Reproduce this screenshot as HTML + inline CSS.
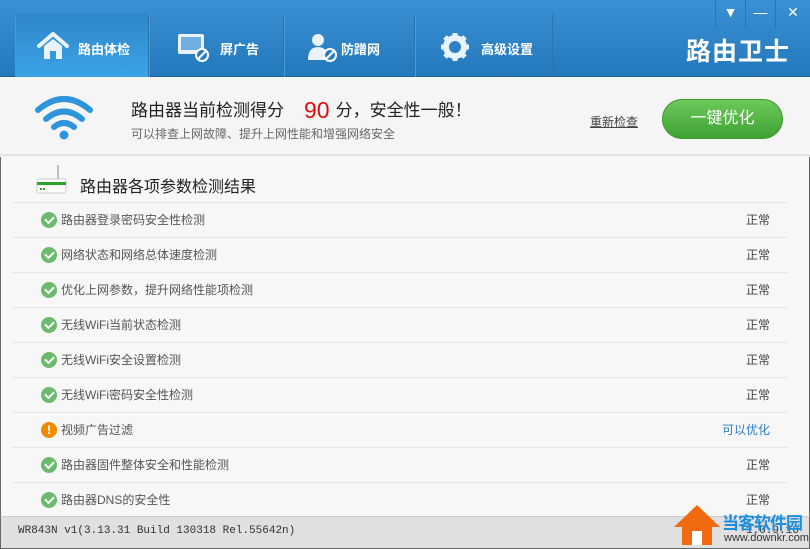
<!DOCTYPE html>
<html><head><meta charset="utf-8"><style>
*{margin:0;padding:0;box-sizing:border-box}
body{width:810px;height:549px;overflow:hidden;font-family:"Liberation Sans","Noto Sans CJK SC",sans-serif;background:#f5f5f5;position:relative}
.hdr{position:absolute;left:0;top:0;width:810px;height:77px;background:linear-gradient(#3a90d2,#2479bd);border-bottom:1px solid #1b5f98}
.tab{position:absolute;top:14px;height:63px;border-right:1px solid #2a74b0;border-left:1px solid #4a9ad8}
.tab.on{background:linear-gradient(#2f86c8,#3aa3e6)}
.tab span{position:absolute;top:25px;color:#fff;font-weight:bold;font-size:13px;white-space:nowrap}
.tab svg{position:absolute;top:18px}
.logo{position:absolute;right:20px;top:32px;color:#fff;font-size:25px;font-weight:bold;letter-spacing:1px}
.ctl{position:absolute;top:0;height:28px;width:30px;color:#fff;text-align:center;font-size:14px;line-height:24px;border-left:1px solid #2a74b0}
.score{position:absolute;left:0;top:78px;width:810px;height:78px;background:#f5f5f5;border-bottom:2px solid #e2e2e2}
.t1{position:absolute;left:131px;top:96px;font-size:17px;color:#222;white-space:nowrap}
.t1 b{color:#d81010;font-weight:normal;font-size:23px;margin:0 6px 0 20px;vertical-align:-2px}
.t2{position:absolute;left:131px;top:125px;font-size:12px;color:#666}
.re{position:absolute;left:590px;top:113px;font-size:12px;color:#444;text-decoration:underline}
.btn{position:absolute;left:662px;top:99px;width:121px;height:40px;border-radius:20px;background:linear-gradient(#6cc95a,#3ea232);border:1px solid #3b9a2f;color:#fff;font-size:16px;text-align:center;line-height:38px}
.list{position:absolute;left:0;top:157px;width:810px;height:359px;background:#f7f7f7;border-left:1px solid #666;border-right:1px solid #666}
.h2{position:absolute;left:80px;top:173px;font-size:16px;color:#222}
.row{position:absolute;left:12px;width:776px;height:35px;border-top:1px solid #e6e6e6;font-size:12px;color:#555}
.row .ic{position:absolute;left:29px;top:9px;width:16px;height:16px;border-radius:50%;background:#6cbb6c}
.row .ic.w{background:#f08a00;color:#fff;font-size:12px;font-weight:bold;text-align:center;line-height:16px}
.row .tx{position:absolute;left:49px;top:8px}
.row .st{position:absolute;right:18px;top:8px;color:#444}
.foot{position:absolute;left:0;top:516px;width:810px;height:33px;background:#e0e0e0;border:1px solid #666;border-top:1px solid #ccc;font-family:"Liberation Mono",monospace;font-size:11px;color:#333}
.row .ic:not(.w)::after{content:"";position:absolute;left:4px;top:4px;width:7px;height:4px;border-left:2px solid #fff;border-bottom:2px solid #fff;transform:rotate(-45deg)}
</style></head><body>
<div class="hdr">
 <div class="tab on" style="left:15px;width:134px">
  <svg style="left:20px" width="34" height="28" viewBox="0 0 34 28"><path d="M3 14 L17 2 L31 14" fill="none" stroke="#e8f3fb" stroke-width="4" stroke-linejoin="round" stroke-linecap="round"/><path d="M8 14 V27 H14 V19 H20 V27 H26 V14 L17 7Z" fill="#e8f3fb"/></svg>
  <span style="left:62px">路由体检</span></div>
 <div class="tab" style="left:149px;width:135px">
  <svg style="left:26px" width="34" height="30" viewBox="0 0 34 30"><rect x="2" y="2" width="26" height="20" rx="2" fill="#e8f3fb"/><rect x="5" y="5" width="20" height="13" fill="#6fb0e0"/><circle cx="26" cy="23" r="6" fill="#2a7cc0" stroke="#fff" stroke-width="2"/><path d="M22 27 L30 19" stroke="#fff" stroke-width="2"/></svg>
  <span style="left:70px">屏广告</span></div>
 <div class="tab" style="left:284px;width:131px">
  <svg style="left:20px" width="34" height="30" viewBox="0 0 34 30"><circle cx="13" cy="8" r="6" fill="#e8f3fb"/><path d="M3 28 Q3 15 13 15 Q23 15 23 28Z" fill="#e8f3fb"/><circle cx="25" cy="23" r="6" fill="#2a7cc0" stroke="#fff" stroke-width="2"/><path d="M21 27 L29 19" stroke="#fff" stroke-width="2"/></svg>
  <span style="left:56px">防蹭网</span></div>
 <div class="tab" style="left:415px;width:138px">
  <svg style="left:24px" width="30" height="30" viewBox="0 0 30 30"><circle cx="15" cy="15" r="9" fill="none" stroke="#e8f3fb" stroke-width="6"/><g stroke="#e8f3fb" stroke-width="5"><path d="M15 1V6M15 24V29M1 15H6M24 15H29M5 5L9 9M21 21L25 25M25 5L21 9M9 21L5 25"/></g></svg>
  <span style="left:65px">高级设置</span></div>
 <div class="ctl" style="left:715px">▼</div><div class="ctl" style="left:745px">—</div><div class="ctl" style="left:775px;width:35px">✕</div>
 <div class="logo">路由卫士</div>
</div>
<div class="score">
 <svg style="position:absolute;left:34px;top:16px" width="60" height="46" viewBox="0 0 60 46"><g fill="none" stroke="#2e95dc" stroke-width="6" stroke-linecap="round"><path d="M4 16 Q30 -6 56 16"/><path d="M12 25 Q30 10 48 25"/><path d="M20 33 Q30 25 40 33"/></g><circle cx="30" cy="41" r="4.5" fill="#2e95dc"/></svg>
</div>
<div class="t1">路由器当前检测得分<b>90</b>分，安全性一般！</div>
<div class="t2">可以排查上网故障、提升上网性能和增强网络安全</div>
<div class="re">重新检查</div>
<div class="btn">一键优化</div>
<div class="list">
 <svg style="position:absolute;left:35px;top:8px" width="32" height="30" viewBox="0 0 32 30"><path d="M22 0V14" stroke="#888" stroke-width="1"/><rect x="1" y="14" width="29" height="14" rx="2" fill="#fff" stroke="#ccc"/><rect x="1" y="17" width="29" height="3" fill="#2aa52a"/><rect x="4" y="23" width="2" height="2" fill="#2aa52a"/><rect x="7" y="23" width="2" height="2" fill="#2aa52a"/></svg>
</div>
<div class="h2">路由器各项参数检测结果</div>
<div class="row" style="top:202px"><div class="ic"></div><div class="tx">路由器登录密码安全性检测</div><div class="st">正常</div></div>
<div class="row" style="top:237px"><div class="ic"></div><div class="tx">网络状态和网络总体速度检测</div><div class="st">正常</div></div>
<div class="row" style="top:272px"><div class="ic"></div><div class="tx">优化上网参数，提升网络性能项检测</div><div class="st">正常</div></div>
<div class="row" style="top:307px"><div class="ic"></div><div class="tx">无线WiFi当前状态检测</div><div class="st">正常</div></div>
<div class="row" style="top:342px"><div class="ic"></div><div class="tx">无线WiFi安全设置检测</div><div class="st">正常</div></div>
<div class="row" style="top:377px"><div class="ic"></div><div class="tx">无线WiFi密码安全性检测</div><div class="st">正常</div></div>
<div class="row" style="top:412px"><div class="ic w">!</div><div class="tx">视频广告过滤</div><div class="st" style="color:#2a7cc0">可以优化</div></div>
<div class="row" style="top:447px"><div class="ic"></div><div class="tx">路由器固件整体安全和性能检测</div><div class="st">正常</div></div>
<div class="row" style="top:482px"><div class="ic"></div><div class="tx">路由器DNS的安全性</div><div class="st">正常</div></div>
<div class="foot"><span style="position:absolute;left:17px;top:8px">WR843N v1(3.13.31 Build 130318 Rel.55642n)</span><span style="position:absolute;left:745px;top:8px">1.0.9.16</span></div>
<svg style="position:absolute;left:672px;top:503px" width="50" height="44" viewBox="0 0 50 44"><path d="M25 2 L48 24 H40 V42 H10 V24 H2Z" fill="#f26a10"/><rect x="20" y="28" width="10" height="14" fill="#fff"/></svg>
<div style="position:absolute;left:722px;top:509px;color:#1a8fe0;font-size:17px;font-weight:bold;white-space:nowrap;letter-spacing:-1px">当客软件园</div>
<div style="position:absolute;left:724px;top:532px;color:#333;font-size:11px;white-space:nowrap">www.downkr.com</div>
</body></html>
